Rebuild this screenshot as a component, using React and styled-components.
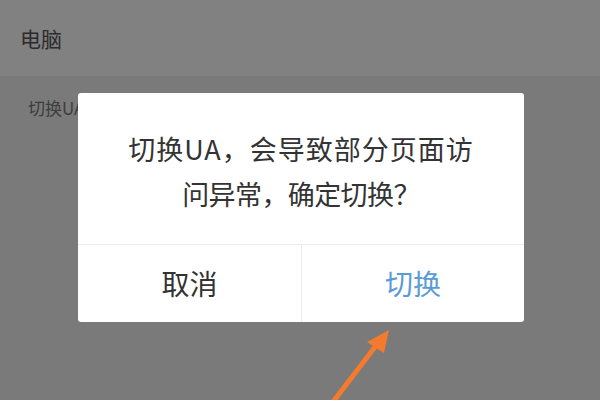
import React from "react";
import styled, { createGlobalStyle } from "styled-components";

const Global = createGlobalStyle`
  html, body {
    margin: 0;
    padding: 0;
    background: #7a7a7a;
  }
  * {
    box-sizing: border-box;
  }
`;

const Screen = styled.div`
  position: relative;
  width: 600px;
  height: 400px;
  overflow: hidden;
  background: #7a7a7a;
  font-family: "Noto Sans CJK SC", "Noto Sans", sans-serif;
`;

const Header = styled.div`
  height: 76px;
  display: flex;
  align-items: center;
  padding-left: 20px;
  background: #818181;
  color: #2b2b2b;
  font-size: 21px;
`;

const Row = styled.div`
  height: 63px;
  display: flex;
  align-items: center;
  padding-left: 28px;
  color: #3c3c3c;
  font-size: 17px;
`;

const Dialog = styled.div`
  position: absolute;
  left: 78px;
  top: 93px;
  width: 446px;
  height: 229px;
  background: #fff;
  border-radius: 3px;
  display: flex;
  flex-direction: column;
`;

const Message = styled.div`
  height: 152px;
  display: flex;
  flex-direction: column;
  align-items: center;
  justify-content: center;
  padding-top: 5px;
  font-size: 27px;
  line-height: 45px;
  color: #333;
  border-bottom: 1px solid #ececec;
`;

const Line = styled.div`
  white-space: nowrap;
  letter-spacing: ${(p) => p.$spacing || 0}px;
`;

const Actions = styled.div`
  flex: 1;
  display: grid;
  grid-template-columns: 1fr 1fr;
`;

const Action = styled.div`
  display: flex;
  align-items: center;
  justify-content: center;
  font-size: 28px;
  padding-bottom: 2px;
  color: ${(p) => (p.$primary ? "#5b9bd6" : "#333")};
  & + & {
    border-left: 1px solid #ececec;
  }
`;

const Arrow = styled.svg`
  position: absolute;
  left: 0;
  top: 0;
  pointer-events: none;
`;

export default function App() {
  return (
    <>
      <Global />
      <Screen>
        <Header>电脑</Header>
        <Row>切换UA</Row>
        <Dialog>
          <Message>
            <Line $spacing={1}>切换UA，会导致部分页面访</Line>
            <Line $spacing={-0.6}>问异常，确定切换？</Line>
          </Message>
          <Actions>
            <Action>取消</Action>
            <Action $primary>切换</Action>
          </Actions>
        </Dialog>
        <Arrow width="600" height="400" viewBox="0 0 600 400">
          <line
            x1="333"
            y1="402"
            x2="378"
            y2="343"
            stroke="#f47a2e"
            strokeWidth="5"
          />
          <polygon points="389,330 367,342 384,353" fill="#f47a2e" />
        </Arrow>
      </Screen>
    </>
  );
}
